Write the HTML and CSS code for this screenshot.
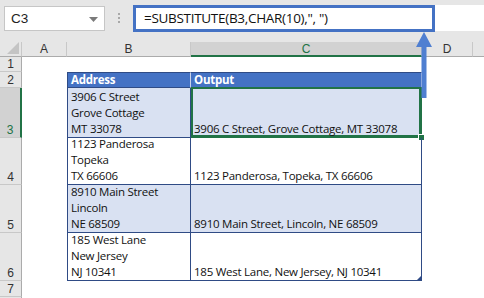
FILE: index.html
```html
<!DOCTYPE html>
<html>
<head>
<meta charset="utf-8">
<link rel="stylesheet" href="styles.css">
</head>
<body>
<div class="app">
  <div class="topbar">
    <div class="namebox">
      <span class="name">C3</span>
      <svg class="dd" width="9" height="5" viewBox="0 0 9 5"><path d="M0 0 H9 L4.5 5 Z" fill="#7a7a7a"/></svg>
    </div>
    <div class="dots"><i></i><i></i><i></i></div>
    <div class="formula">=SUBSTITUTE(B3,CHAR(10),", ")</div>
  </div>
  <div class="sheet">
    <div class="corner"><svg width="12" height="12" viewBox="0 0 12 12"><path d="M12 0 V12 H0 Z" fill="#c4c4c4"/></svg></div>
    <div class="ch">A</div>
    <div class="ch">B</div>
    <div class="ch chsel">C</div>
    <div class="ch">D</div>
    <div class="ch chend"></div>

    <div class="rh">1</div><div class="c"></div><div class="c"></div><div class="c"></div><div class="c"></div><div class="c"></div>

    <div class="rh">2</div><div class="c"></div>
    <div class="t tb th">Address</div><div class="t th">Output</div>
    <div class="c"></div><div class="c"></div>

    <div class="rh rhsel">3</div><div class="c"></div>
    <div class="t tb band">3906 C Street<br>Grove Cottage<br>MT 33078</div>
    <div class="t band sel">3906 C Street, Grove Cottage, MT 33078<span class="handle"></span></div>
    <div class="c"></div><div class="c"></div>

    <div class="rh">4</div><div class="c"></div>
    <div class="t tb">1123 Panderosa<br>Topeka<br>TX 66606</div>
    <div class="t">1123 Panderosa, Topeka, TX 66606</div>
    <div class="c"></div><div class="c"></div>

    <div class="rh">5</div><div class="c"></div>
    <div class="t tb band">8910 Main Street<br>Lincoln<br>NE 68509</div>
    <div class="t band">8910 Main Street, Lincoln, NE 68509</div>
    <div class="c"></div><div class="c"></div>

    <div class="rh">6</div><div class="c"></div>
    <div class="t tb">185 West Lane<br>New Jersey<br>NJ 10341</div>
    <div class="t last">185 West Lane, New Jersey, NJ 10341<span class="resize"></span></div>
    <div class="c"></div><div class="c"></div>

    <div class="rh">7</div><div class="c"></div><div class="c"></div><div class="c"></div><div class="c"></div><div class="c"></div>
    <div class="rh rhend"></div><div class="c"></div><div class="c"></div><div class="c"></div><div class="c"></div><div class="c"></div>
  </div>
  <div class="callout"></div>
  <svg class="arrow" width="20" height="70" viewBox="0 0 20 70">
    <rect x="7.5" y="13" width="5" height="53" fill="#4f7fd1"/>
    <path d="M2 15 L10 0 L18 15 Z" fill="#4f7fd1"/>
  </svg>
</div>
</body>
</html>
```

FILE: styles.css
```css
* { box-sizing: border-box; margin: 0; padding: 0; }
html, body { width: 484px; height: 298px; overflow: hidden; background: #fff; }
.app { position: relative; width: 484px; height: 298px; overflow: hidden; }

.topbar {
  height: 42px;
  background: #e6e6e6;
  display: flex;
  align-items: flex-start;
  padding-top: 5px;
}
.namebox {
  margin-left: 4px;
  margin-top: 1px;
  width: 101px;
  height: 25px;
  background: #fff;
  border: 1px solid #c6c6c6;
  display: flex;
  align-items: center;
  justify-content: space-between;
  padding: 0 6px 0 6px;
}
.name {
  font-family: "Liberation Sans", Arial, sans-serif;
  font-size: 13.5px;
  color: #222;
}
.dd { margin-top: 1px; }
.dots {
  width: 28px;
  height: 26px;
  display: flex;
  flex-direction: column;
  align-items: center;
  justify-content: center;
  gap: 2px;
}
.dots i { display: block; width: 2px; height: 2px; background: #a8a8a8; }
.formula {
  flex: 1;
  height: 26px;
  background: #fff;
  padding-left: 11px;
  font-family: "Open Sans", sans-serif;
  font-size: 13.5px;
  line-height: 27px;
  color: #111;
  letter-spacing: -0.3px;
}

.sheet {
  display: grid;
  grid-template-columns: 22px 45px 124px 231px 51px 11px;
  grid-template-rows: 15px 15px 16px 50px 47px 48px 48px 16px 9px;
  font-family: "Liberation Sans", Arial, sans-serif;
}
.corner {
  background: #e6e6e6;
  border-right: 1px solid #c8c8c8;
  border-bottom: 1px solid #ababab;
  display: flex;
  align-items: flex-end;
  justify-content: flex-end;
  padding: 0 2px 2px 0;
}
.ch {
  background: #e6e6e6;
  border-right: 1px solid #c8c8c8;
  border-bottom: 1px solid #ababab;
  font-size: 12px;
  line-height: 15px;
  text-align: center;
  color: #333;
}
.chsel { background: #d2d2d2; color: #217346; border-bottom: 2px solid #217346; }
.chend { border-right: none; }
.rh {
  background: #e6e6e6;
  border-right: 1px solid #ababab;
  border-bottom: 1px solid #c8c8c8;
  font-size: 12px;
  line-height: 14px;
  text-align: center;
  color: #333;
  display: flex;
  align-items: flex-end;
  justify-content: center;
}
.rhsel { background: #d2d2d2; color: #217346; border-right: 2px solid #217346; }
.rhend { border-bottom: none; }
.c { background: #fff; }

.t {
  position: relative;
  border-bottom: 1px solid #2f4b85;
  border-right: 1px solid #2f4b85;
  font-family: "Open Sans", sans-serif;
  font-size: 11.5px;
  line-height: 16px;
  letter-spacing: -0.25px;
  color: #111;
  padding-left: 3px;
  display: flex;
  flex-direction: column;
  justify-content: flex-end;
  white-space: nowrap;
}
.tb { border-left: 1px solid #2f4b85; }
.th {
  background: #4472c4;
  color: #fff;
  font-weight: 700;
  border-top: 1px solid #2f4b85;
  border-right-color: #c9d3ea;
  justify-content: center;
  line-height: 14px;
}
.th.tb { border-right-color: #c9d3ea; }
.band { background: #d9e1f2; }
.sel {
  box-shadow: inset 0 0 0 2px #217346;
  border-right-color: #217346;
  border-bottom-color: #217346;
  margin-top: -1px;
}
.handle {
  position: absolute;
  right: -4px;
  bottom: -4px;
  width: 7px;
  height: 7px;
  background: #217346;
  border: 1px solid #fff;
}
.resize {
  position: absolute;
  right: 0;
  bottom: 0;
  width: 0;
  height: 0;
  border-left: 4px solid transparent;
  border-bottom: 4px solid #2f4b85;
}

.callout {
  position: absolute;
  left: 133px;
  top: 5px;
  width: 302px;
  height: 27px;
  border: 3px solid #4472c4;
}
.arrow {
  position: absolute;
  left: 414px;
  top: 32px;
}
```
